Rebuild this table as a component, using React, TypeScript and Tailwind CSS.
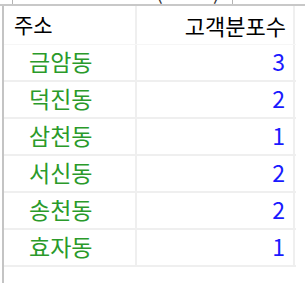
import React from "react";

const rows: [string, number][] = [
  ["금암동", 3],
  ["덕진동", 2],
  ["삼천동", 1],
  ["서신동", 2],
  ["송천동", 2],
  ["효자동", 1],
];

export default function App() {
  return (
    <div className="w-[305px] h-[283px] bg-white overflow-hidden flex flex-col font-['Noto_Sans_CJK_KR','Noto_Sans',sans-serif]">
      {/* clipped caption edge */}
      <div className="h-[4px] flex shrink-0">
        <div className="w-[12px]" />
        <div className="w-[221px] border-x border-[#b4b4b4] relative overflow-hidden">
          <span className="absolute left-[143px] top-[-19px] text-[20px] leading-[22px] text-[#333]">(</span>
          <span className="absolute left-[200px] top-[-19px] text-[20px] leading-[22px] text-[#333]">)</span>
        </div>
      </div>
      <div className="h-[2px] bg-[#c8c8c8] shrink-0" />
      <div className="flex flex-1">
        <div className="w-[2px] ml-[2px] bg-[#c4c4c4]" />
        <div className="w-[292px] flex flex-col">
          <div className="flex h-[39px] border-b border-[#f6f6f6]">
            <div className="w-[131px] flex items-center pl-[10px] text-[21px] text-black">주소</div>
            <div className="w-[160px] border-l-2 border-r-2 border-[#efefef] flex items-center justify-end pr-[7px] text-[22px] text-black">
              고객분포수
            </div>
          </div>
          {rows.map(([name, n]) => (
            <div key={name} className="flex h-[37px] border-b-2 border-[#efefef]">
              <div className="w-[131px] flex items-center pl-[25px] pb-[3px] text-[23px] text-[#2a9a2a]">{name}</div>
              <div className="w-[160px] border-l-2 border-r-2 border-[#efefef] flex items-center justify-end pr-[8px] pb-[3px] text-[23px] text-[#1a1aff]">
                {n}
              </div>
            </div>
          ))}
        </div>
      </div>
    </div>
  );
}
